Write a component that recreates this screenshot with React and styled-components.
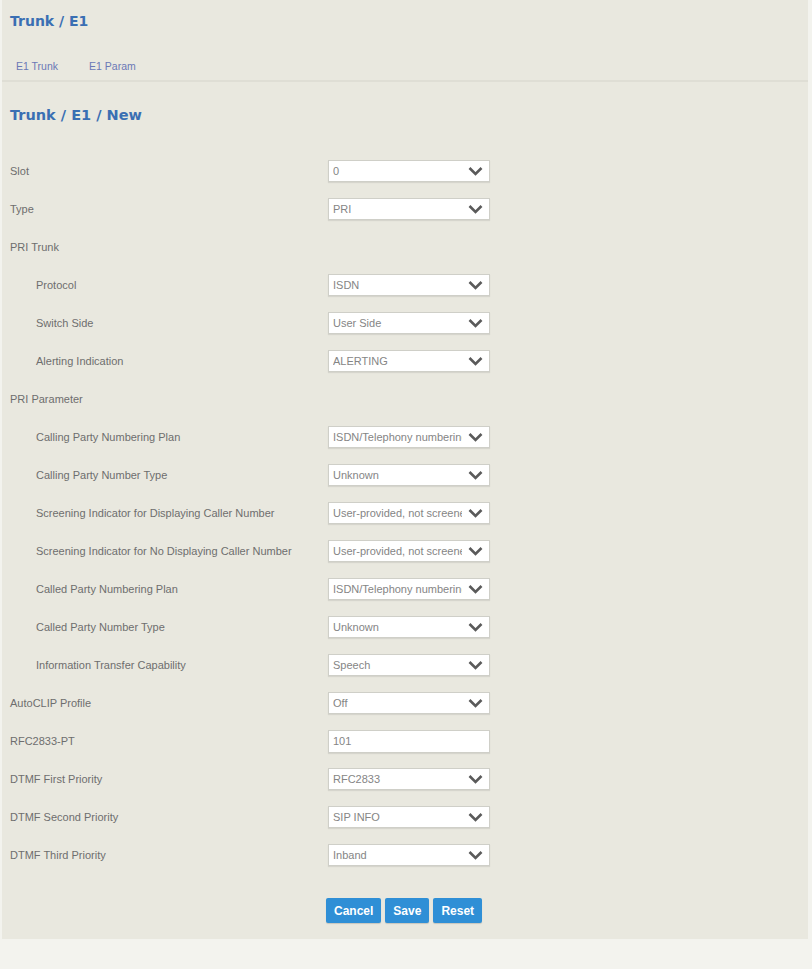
import React from 'react'
import styled, { createGlobalStyle } from 'styled-components'

const GlobalStyle = createGlobalStyle`
  html, body {
    margin: 0;
    padding: 0;
    background: #f3f3ee;
  }
  body {
    font-family: "Liberation Sans", Arial, sans-serif;
  }
`

const rows = [
  { label: 'Slot', value: '0' },
  { label: 'Type', value: 'PRI' },
  { label: 'PRI Trunk', group: true },
  { label: 'Protocol', value: 'ISDN', sub: true },
  { label: 'Switch Side', value: 'User Side', sub: true },
  { label: 'Alerting Indication', value: 'ALERTING', sub: true },
  { label: 'PRI Parameter', group: true },
  { label: 'Calling Party Numbering Plan', value: 'ISDN/Telephony numbering', sub: true },
  { label: 'Calling Party Number Type', value: 'Unknown', sub: true },
  { label: 'Screening Indicator for Displaying Caller Number', value: 'User-provided, not screened', sub: true },
  { label: 'Screening Indicator for No Displaying Caller Number', value: 'User-provided, not screened', sub: true },
  { label: 'Called Party Numbering Plan', value: 'ISDN/Telephony numbering', sub: true },
  { label: 'Called Party Number Type', value: 'Unknown', sub: true },
  { label: 'Information Transfer Capability', value: 'Speech', sub: true },
  { label: 'AutoCLIP Profile', value: 'Off' },
  { label: 'RFC2833-PT', value: '101', text: true },
  { label: 'DTMF First Priority', value: 'RFC2833' },
  { label: 'DTMF Second Priority', value: 'SIP INFO' },
  { label: 'DTMF Third Priority', value: 'Inband' },
]

const Chevron = () => (
  <svg width="15" height="10" viewBox="0 0 15 10">
    <path d="M1.5 2 L7.5 8 L13.5 2" fill="none" stroke="#5a5a5a" strokeWidth="2.6" strokeLinejoin="miter" />
  </svg>
)

const App = () => {
  return (
    <Page>
      <GlobalStyle />
      <Panel>
        <Title>Trunk / E1</Title>
        <Tabs>
          <Tab>E1 Trunk</Tab>
          <Tab>E1 Param</Tab>
        </Tabs>
        <Title $sub>Trunk / E1 / New</Title>
        <Form>
          {rows.map((r) => (
            <Row key={r.label}>
              <Label $sub={r.sub}>{r.label}</Label>
              {r.group ? null : r.text ? (
                <TextBox>{r.value}</TextBox>
              ) : (
                <Select>
                  <SelectText>{r.value}</SelectText>
                  <Chevron />
                </Select>
              )}
            </Row>
          ))}
        </Form>
        <Buttons>
          <Button>Cancel</Button>
          <Button>Save</Button>
          <Button>Reset</Button>
        </Buttons>
      </Panel>
      <Footer />
    </Page>
  )
}

const Page = styled.div`
  width: 812px;
  min-height: 969px;
  display: flex;
  flex-direction: column;
  background: #f3f3ee;
`

const Panel = styled.section`
  width: 806px;
  margin-left: 2px;
  background: #e9e8df;
  padding-bottom: 16px;
`

const Title = styled.h1`
  margin: 0;
  padding: ${({ $sub }) => ($sub ? '24px 0 0 8px' : '12px 0 0 8px')};
  font-family: "DejaVu Sans", Verdana, sans-serif;
  font-weight: bold;
  font-size: ${({ $sub }) => ($sub ? '14.5px' : '14px')};
  line-height: 18px;
  color: #3a6fb3;
`

const Tabs = styled.nav`
  display: flex;
  gap: 31px;
  padding: 0 0 0 14px;
  margin-top: 22px;
  height: 28px;
  align-items: center;
  border-bottom: 2px solid #dfded5;
`

const Tab = styled.span`
  font-size: 10.5px;
  color: #6b78b6;
`

const Form = styled.div`
  display: flex;
  flex-direction: column;
  margin-top: 28px;
`

const Row = styled.div`
  display: grid;
  grid-template-columns: 318px 162px;
  align-items: center;
  height: 38px;
  padding-left: 8px;
`

const Label = styled.div`
  padding-left: ${({ $sub }) => ($sub ? '26px' : '0')};
  font-size: 11px;
  color: #6e6e6e;
  white-space: nowrap;
`

const Select = styled.div`
  display: flex;
  align-items: center;
  justify-content: space-between;
  height: 22px;
  box-sizing: border-box;
  padding: 0 6px 0 4px;
  background: #fff;
  border: 1px solid #cfcfc8;
  box-shadow: 0 1px 1px rgba(0, 0, 0, 0.08);
`

const SelectText = styled.span`
  font-size: 11px;
  color: #858585;
  white-space: nowrap;
  overflow: hidden;
  width: 129px;
`

const TextBox = styled.div`
  height: 23px;
  box-sizing: border-box;
  padding: 0 4px;
  display: flex;
  align-items: center;
  background: #fff;
  border: 1px solid #cfcfc8;
  box-shadow: 0 1px 1px rgba(0, 0, 0, 0.08);
  font-size: 11px;
  color: #858585;
`

const Buttons = styled.div`
  display: flex;
  gap: 4px;
  margin-top: 24px;
  padding-left: 324px;
`

const Button = styled.button`
  height: 25px;
  padding: 0 8px;
  border: none;
  border-radius: 2px;
  background: #2f8fd6;
  color: #fff;
  font-family: "Liberation Sans", Arial, sans-serif;
  font-size: 12px;
  font-weight: bold;
  box-shadow: 0 1px 1px rgba(0, 0, 0, 0.15);
`

const Footer = styled.footer`
  flex: 1;
  background: #f3f3ee;
`

export default App
